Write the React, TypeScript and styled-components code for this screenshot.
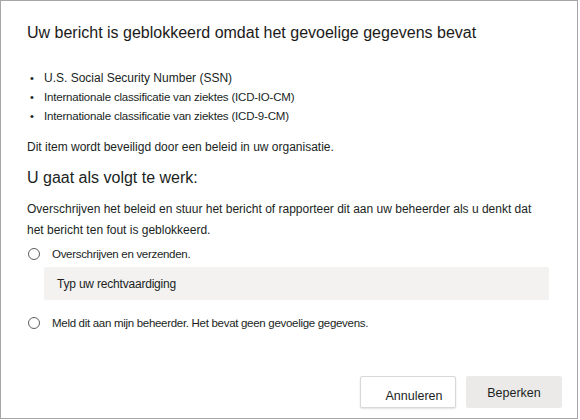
import React from 'react';
import styled, { createGlobalStyle } from 'styled-components';

const GlobalStyle = createGlobalStyle`
	html, body {
		margin: 0;
		padding: 0;
		background: #ffffff;
	}
	body {
		font-family: 'Liberation Sans', Arial, sans-serif;
		color: #201f1e;
	}
`;

const Styled = {
	Dialog: styled.div`
		box-sizing: border-box;
		width: 578px;
		height: 419px;
		border: 1px solid #a6a6a6;
		background: #ffffff;
		padding: 21px 26px 0 26px;
		display: flex;
		flex-direction: column;
	`,
	Title: styled.h1`
		margin: 0;
		font-size: 16px;
		font-weight: 400;
		line-height: 22px;
		color: #1b1a19;
	`,
	List: styled.ul`
		margin: 27px 0 0 0;
		padding: 0;
		list-style: none;
		display: flex;
		flex-direction: column;
		gap: 6px;
	`,
	Item: styled.li<{ tight?: boolean }>`
		display: flex;
		align-items: center;
		height: 13px;
		font-size: ${props => (props.tight ? '11.5px' : '12px')};
		letter-spacing: ${props => (props.tight ? '-0.2px' : '0')};
		&::before {
			content: '•';
			width: 17px;
			padding-left: 3px;
			box-sizing: border-box;
			font-size: 11px;
		}
	`,
	Text: styled.p<{ top: number }>`
		margin: ${props => props.top}px 0 0 0;
		font-size: 12px;
		line-height: 21px;
	`,
	SubTitle: styled.h2`
		margin: 9px 0 0 0;
		font-size: 16px;
		font-weight: 400;
		line-height: 22px;
	`,
	Option: styled.label<{ top: number }>`
		display: flex;
		align-items: center;
		gap: 12px;
		margin-top: ${props => props.top}px;
		padding-left: 1px;
		font-size: 11.5px;
		letter-spacing: -0.3px;
		line-height: 14px;
	`,
	Radio: styled.span`
		box-sizing: border-box;
		width: 12px;
		height: 12px;
		border: 1px solid #605e5c;
		border-radius: 50%;
		flex: none;
	`,
	Input: styled.div`
		margin: 6px 2px 0 17px;
		height: 33px;
		background: #f3f2f1;
		border-radius: 2px;
		display: flex;
		align-items: center;
		padding-left: 13px;
		font-size: 12px;
		letter-spacing: -0.2px;
		color: #201f1e;
	`,
	Footer: styled.div`
		margin-top: auto;
		margin-bottom: 10px;
		margin-right: -11px;
		display: flex;
		justify-content: flex-end;
		gap: 10px;
	`,
	Button: styled.button<{ primary?: boolean }>`
		box-sizing: border-box;
		width: 96px;
		height: 32px;
		font-family: 'Liberation Sans', Arial, sans-serif;
		font-size: 12.5px;
		color: #201f1e;
		border-radius: 2px;
		border: 1px solid ${props => (props.primary ? '#ebeae9' : '#d8d8d8')};
		background: ${props => (props.primary ? '#ebeae9' : '#ffffff')};
		box-shadow: ${props =>
			props.primary ? 'none' : '0 1px 2px rgba(0, 0, 0, 0.12)'};
		padding: ${props => (props.primary ? '1px 0 0 0' : '7px 0 0 12px')};
	`,
};

const items = [
	{ text: 'U.S. Social Security Number (SSN)', tight: false },
	{ text: 'Internationale classificatie van ziektes (ICD-IO-CM)', tight: true },
	{ text: 'Internationale classificatie van ziektes (ICD-9-CM)', tight: true },
];

const App = () => {
	return (
		<>
			<GlobalStyle />
			<Styled.Dialog>
				<Styled.Title>
					Uw bericht is geblokkeerd omdat het gevoelige gegevens bevat
				</Styled.Title>
				<Styled.List>
					{items.map(res => (
						<Styled.Item key={res.text} tight={res.tight}>
							{res.text}
						</Styled.Item>
					))}
				</Styled.List>
				<Styled.Text top={15}>
					Dit item wordt beveiligd door een beleid in uw organisatie.
				</Styled.Text>
				<Styled.SubTitle>U gaat als volgt te werk:</Styled.SubTitle>
				<Styled.Text top={10}>
					Overschrijven het beleid en stuur het bericht of rapporteer dit
					aan uw beheerder als u denkt dat het bericht ten fout is
					geblokkeerd.
				</Styled.Text>
				<Styled.Option top={6}>
					<Styled.Radio />
					Overschrijven en verzenden.
				</Styled.Option>
				<Styled.Input>Typ uw rechtvaardiging</Styled.Input>
				<Styled.Option top={16}>
					<Styled.Radio />
					Meld dit aan mijn beheerder. Het bevat geen gevoelige gegevens.
				</Styled.Option>
				<Styled.Footer>
					<Styled.Button>Annuleren</Styled.Button>
					<Styled.Button primary>Beperken</Styled.Button>
				</Styled.Footer>
			</Styled.Dialog>
		</>
	);
};

export default App;
